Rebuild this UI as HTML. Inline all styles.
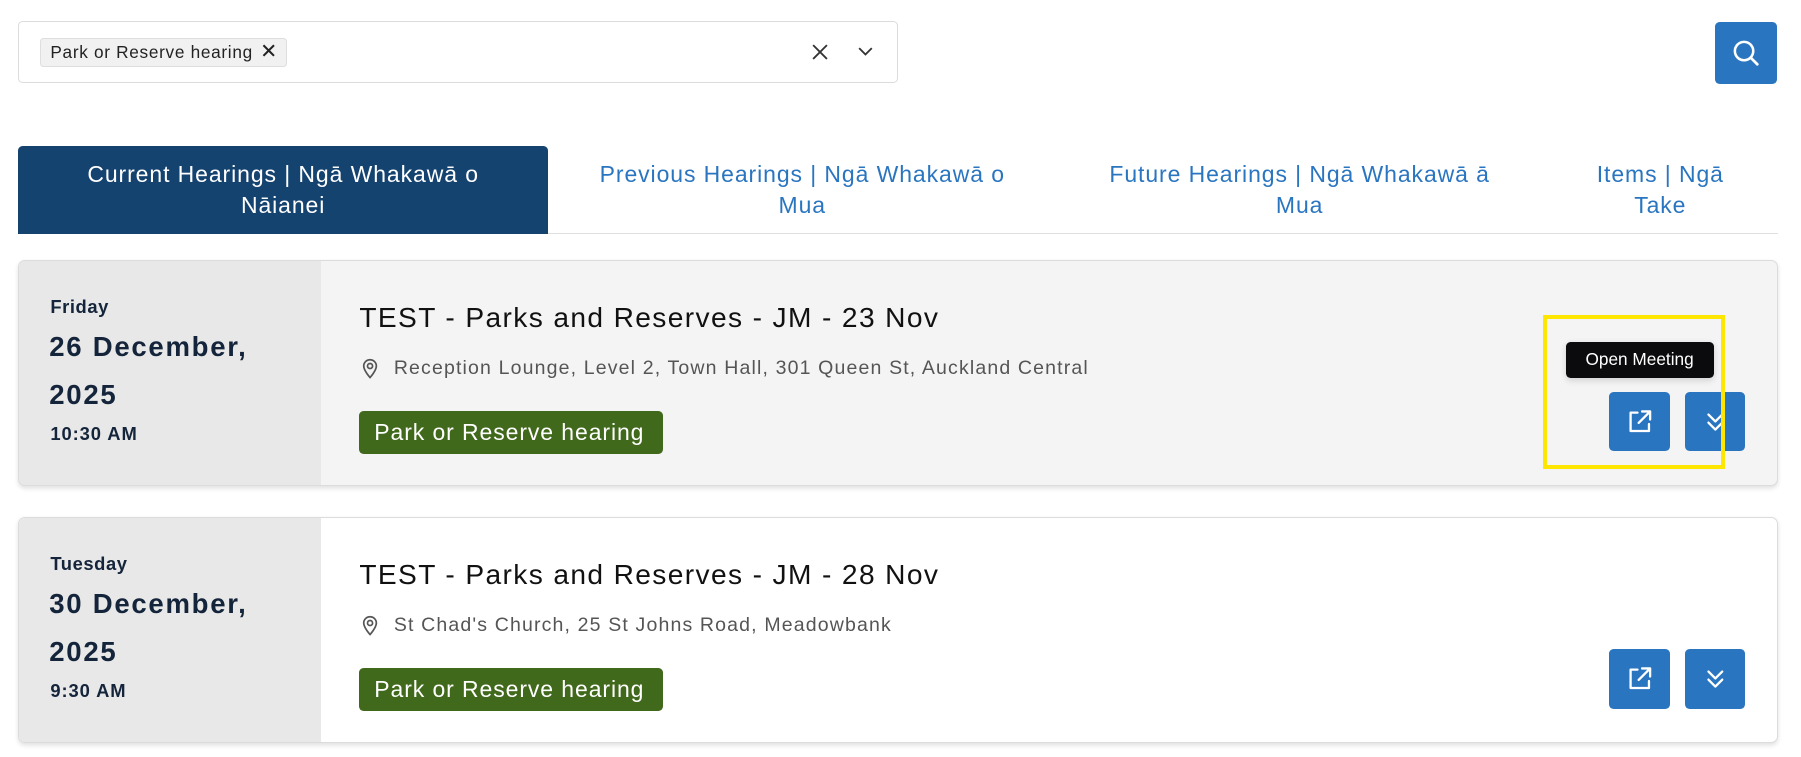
<!DOCTYPE html>
<html><head><meta charset="utf-8"><style>
html,body{margin:0;padding:0;background:#fff;width:1801px;height:757px;overflow:hidden}
#w{position:relative;width:1568px;height:659px;zoom:1.14860;font-family:"Liberation Sans",Arial,sans-serif}
.a{position:absolute}
.sel{left:16px;top:18px;width:766px;height:54px;border:1px solid #dcdcdc;border-radius:4px;box-sizing:border-box}
.chip{left:35px;top:33px;width:215px;height:25px;background:#f1f1f1;border:1px solid #dedede;border-radius:3px;box-sizing:border-box;font-size:15px;letter-spacing:.6px;color:#222;line-height:23px;padding-left:8px}
.btn{background:#2a75c0;border-radius:4px}
.tab{top:127px;height:77px;font-size:20px;letter-spacing:.8px;line-height:27px;text-align:center;color:#2a75c0;display:flex;align-items:center;justify-content:center}
.card{left:16px;width:1532px;height:197px;border:1px solid #dcdcdc;border-radius:6px;box-sizing:border-box;box-shadow:0 2px 4px rgba(0,0,0,.12);overflow:hidden}
.dp{left:0;top:0;width:263px;height:100%;background:#e8e8e8;color:#14243a;font-weight:bold}
.t{font-size:24.5px;letter-spacing:1.2px;color:#111}
.loc{font-size:17px;letter-spacing:1px;color:#555}
.badge{background:#41691b;color:#fff;font-size:20px;letter-spacing:.8px;border-radius:4px;height:37px;line-height:37px;padding:0 13px;box-sizing:border-box}
</style></head><body><div id="w">
<div class="a sel"></div>
<div class="a chip">Park or Reserve hearing<span style="position:absolute;right:7px;top:0;font-size:18px">✕</span></div>
<svg class="a" style="left:707px;top:38px" width="14" height="14" viewBox="0 0 14 14"><path d="M1 1L13 13M13 1L1 13" stroke="#333" stroke-width="1.6"/></svg>
<svg class="a" style="left:747px;top:41px" width="13" height="8" viewBox="0 0 13 8"><path d="M1 1L6.5 6.5L12 1" stroke="#333" stroke-width="1.6" fill="none"/></svg>
<div class="a btn" style="left:1493px;top:19px;width:54px;height:54px"></div>
<svg class="a" style="left:1508px;top:34px" width="24" height="24" viewBox="0 0 24 24"><circle cx="10.5" cy="10.5" r="8" stroke="#fff" stroke-width="2.2" fill="none"/><path d="M16.5 16.5L22 22" stroke="#fff" stroke-width="2.4" stroke-linecap="round"/></svg>
<div class="a" style="left:16px;top:203px;width:1532px;height:1px;background:#dfdfdf"></div>
<div class="a tab" style="left:16px;width:461px;background:#154370;color:#fff;border-radius:4px 4px 0 0">Current Hearings | Ngā Whakawā o<br>Nāianei</div>
<div class="a tab" style="left:477px;width:443px">Previous Hearings | Ngā Whakawā o<br>Mua</div>
<div class="a tab" style="left:920px;width:423px">Future Hearings | Ngā Whakawā ā<br>Mua</div>
<div class="a tab" style="left:1343px;width:205px">Items | Ngā<br>Take</div>

<div class="a card" style="top:226px;background:#f4f4f4">
 <div class="a dp"><div class="a" style="left:27px;top:31px;font-size:16px;letter-spacing:.5px">Friday</div><div class="a" style="left:26px;top:54px;font-size:24px;letter-spacing:1.5px;line-height:42px">26 December,<br>2025</div><div class="a" style="left:27px;top:141px;font-size:16px;letter-spacing:.8px">10:30 AM</div></div>
 <div class="a t" style="left:296px;top:36px">TEST - Parks and Reserves - JM - 23 Nov</div>
 <svg class="a" style="left:298px;top:85px" width="14" height="18" viewBox="0 0 14 18"><path d="M7 17C7 17 1.5 11 1.5 7A5.5 5.5 0 0 1 12.5 7C12.5 11 7 17 7 17Z" stroke="#555" stroke-width="1.5" fill="none"/><circle cx="7" cy="7" r="2.2" stroke="#555" stroke-width="1.5" fill="none"/></svg>
 <div class="a loc" style="left:326px;top:84px">Reception Lounge, Level 2, Town Hall, 301 Queen St, Auckland Central</div>
 <div class="a badge" style="left:296px;top:131px;width:264px">Park or Reserve hearing</div>
</div>
<div class="a card" style="top:450px;background:#fff">
 <div class="a dp"><div class="a" style="left:27px;top:31px;font-size:16px;letter-spacing:.5px">Tuesday</div><div class="a" style="left:26px;top:54px;font-size:24px;letter-spacing:1.5px;line-height:42px">30 December,<br>2025</div><div class="a" style="left:27px;top:141px;font-size:16px;letter-spacing:.8px">9:30 AM</div></div>
 <div class="a t" style="left:296px;top:36px">TEST - Parks and Reserves - JM - 28 Nov</div>
 <svg class="a" style="left:298px;top:85px" width="14" height="18" viewBox="0 0 14 18"><path d="M7 17C7 17 1.5 11 1.5 7A5.5 5.5 0 0 1 12.5 7C12.5 11 7 17 7 17Z" stroke="#555" stroke-width="1.5" fill="none"/><circle cx="7" cy="7" r="2.2" stroke="#555" stroke-width="1.5" fill="none"/></svg>
 <div class="a loc" style="left:326px;top:84px">St Chad's Church, 25 St Johns Road, Meadowbank</div>
 <div class="a badge" style="left:296px;top:131px;width:264px">Park or Reserve hearing</div>
</div>

<div class="a btn" style="left:1401px;top:341px;width:53px;height:52px"></div>
<div class="a btn" style="left:1467px;top:341px;width:52px;height:52px"></div>
<div class="a btn" style="left:1401px;top:565px;width:53px;height:52px"></div>
<div class="a btn" style="left:1467px;top:565px;width:52px;height:52px"></div>
<svg class="a" style="left:1416px;top:355px" width="24" height="24" viewBox="0 0 24 24"><path d="M10 4H4V20H20V14M14 3H21V10M21 3L11 13" stroke="#fff" stroke-width="2" fill="none" stroke-linecap="round" stroke-linejoin="round"/></svg>
<svg class="a" style="left:1416px;top:579px" width="24" height="24" viewBox="0 0 24 24"><path d="M10 4H4V20H20V14M14 3H21V10M21 3L11 13" stroke="#fff" stroke-width="2" fill="none" stroke-linecap="round" stroke-linejoin="round"/></svg>
<svg class="a" style="left:1484px;top:357px" width="18" height="20" viewBox="0 0 18 20"><path d="M3 4L9 10L15 4M3 11L9 17L15 11" stroke="#fff" stroke-width="2" fill="none" stroke-linecap="round" stroke-linejoin="round"/></svg>
<svg class="a" style="left:1484px;top:581px" width="18" height="20" viewBox="0 0 18 20"><path d="M3 4L9 10L15 4M3 11L9 17L15 11" stroke="#fff" stroke-width="2" fill="none" stroke-linecap="round" stroke-linejoin="round"/></svg>
<div class="a" style="left:1363px;top:298px;width:129px;height:31px;background:#0b0b0d;border-radius:4px;color:#fff;font-size:15px;line-height:31px;text-align:center;box-shadow:0 2px 6px rgba(0,0,0,.15)">Open Meeting</div>
<div class="a" style="left:1343px;top:274px;width:159px;height:134px;border:4px solid #ffe600;box-sizing:border-box"></div>
</div></body></html>
